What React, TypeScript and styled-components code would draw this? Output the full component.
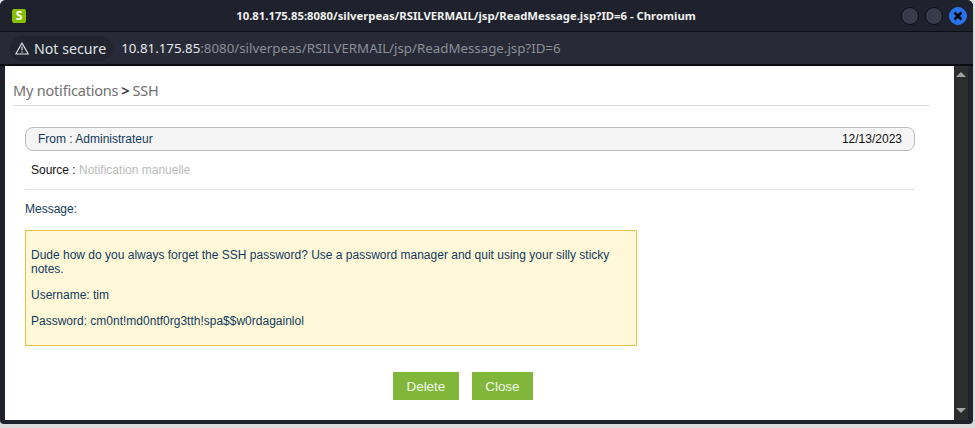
import React from 'react';
import styled, { createGlobalStyle } from 'styled-components';

const GlobalStyle = createGlobalStyle`
  html, body {
    margin: 0;
    padding: 0;
    width: 975px;
    height: 428px;
    overflow: hidden;
    background: #d9d9d9;
    font-family: "Liberation Sans", Arial, sans-serif;
  }
`;

const Desktop = styled.div`
  width: 975px;
  height: 428px;
  background: #dcdcdc;
  overflow: hidden;
`;

const BrowserWindow = styled.div`
  width: 973px;
  height: 424px;
  display: flex;
  flex-direction: column;
  background: #1f222c;
  border-radius: 6px 6px 4px 4px;
  overflow: hidden;
`;

const TitleBar = styled.div`
  height: 31px;
  flex: none;
  display: flex;
  align-items: center;
  padding: 0 6px 0 12px;
  background: #1f222c;
  border-bottom: 1px solid #0e0f14;
`;

const AppIcon = styled.div`
  width: 14px;
  height: 14px;
  flex: none;
  margin-top: 1px;
  border-radius: 2px;
  background: #86c000;
  color: #fff;
  font: bold 12px/14px "Open Sans", sans-serif;
  text-align: center;
`;

const WindowTitle = styled.div`
  flex: 1;
  padding-left: 5px;
  text-align: center;
  color: #f0f0f0;
  font: bold 11.3px "Noto Sans", sans-serif;
`;

const WindowButtons = styled.div`
  display: flex;
  gap: 6px;
`;

const RoundButton = styled.div<{ $close?: boolean }>`
  width: 18px;
  height: 18px;
  box-sizing: border-box;
  border-radius: 50%;
  display: flex;
  align-items: center;
  justify-content: center;
  background: ${(p) => (p.$close ? '#2a73ee' : '#383c4a')};
  border: 1px solid ${(p) => (p.$close ? '#2a73ee' : '#0c0d12')};
`;

const AddressBar = styled.div`
  height: 32px;
  flex: none;
  display: flex;
  align-items: center;
  padding-left: 10px;
  background: #282b37;
  border-bottom: 2px solid #0b0c10;
  font-family: "Noto Sans", sans-serif;
`;

const SecurityChip = styled.div`
  height: 25px;
  display: flex;
  align-items: center;
  gap: 5px;
  padding: 0 7px 0 5px;
  border-radius: 13px;
  background: #22252f;
  color: #dfe1e6;
  font-size: 14.2px;
`;

const Url = styled.div`
  margin-left: 8px;
  color: #8b8e97;
  font-size: 13.3px;

  b {
    font-weight: 400;
    color: #e6e7ea;
  }
`;

const ClientArea = styled.div`
  flex: 1;
  min-height: 0;
  display: flex;
  padding: 0 5px 4px;
`;

const Page = styled.div`
  flex: 1;
  background: #fff;
  padding: 0 24px 0 8px;
`;

const Breadcrumb = styled.div`
  height: 40px;
  box-sizing: border-box;
  padding: 14px 0 0 0;
  border-bottom: 1px solid #dedede;
  color: #707070;
  font: 14.5px "Noto Sans", sans-serif;
  letter-spacing: -0.2px;

  span {
    color: #333;
    margin: 0 3px;
    font-weight: 600;
  }
`;

const Content = styled.div`
  padding: 21px 15px 0 12px;
`;

const FromBar = styled.div`
  height: 24px;
  box-sizing: border-box;
  display: flex;
  align-items: center;
  justify-content: space-between;
  padding: 0 12px;
  border: 1px solid #bcbcbc;
  border-radius: 8px;
  background: #f5f5f5;
  color: #123a5c;
  font-size: 12px;
`;

const DateText = styled.span`
  color: #111;
`;

const SourceRow = styled.div`
  height: 39px;
  box-sizing: border-box;
  padding: 12px 0 0 6px;
  border-bottom: 1px solid #e4e4e4;
  color: #111;
  font-size: 12px;

  span {
    color: #bbb;
  }
`;

const MessageLabel = styled.div`
  margin-top: 12px;
  color: #123a5c;
  font-size: 12px;
`;

const MessageBox = styled.div`
  width: 612px;
  height: 116px;
  margin-top: 14px;
  box-sizing: border-box;
  padding: 17px 5px 0;
  border: 1px solid #e2c53f;
  background: #fff8d8;
  color: #123a5c;
  font-size: 12px;
  line-height: 14px;

  p {
    margin: 0 0 12px;
  }
`;

const Actions = styled.div`
  display: flex;
  justify-content: center;
  gap: 13px;
  margin-top: 26px;
  padding-right: 14px;
`;

const ActionButton = styled.button`
  height: 28px;
  padding: 0 13.5px;
  border: 0;
  background: #80b73b;
  color: #f2f7e8;
  font: 13.4px "Liberation Sans", sans-serif;
`;

const Scrollbar = styled.div`
  width: 14px;
  flex: none;
  display: flex;
  flex-direction: column;
  justify-content: space-between;
  align-items: center;
  padding: 6px 0 7px;
  box-sizing: border-box;
  background: #2d2d2d;
`;

const Arrow = styled.div<{ $down?: boolean }>`
  width: 0;
  height: 0;
  border-left: 5px solid transparent;
  border-right: 5px solid transparent;
  ${(p) => (p.$down ? 'border-top' : 'border-bottom')}: 5px solid #a3a3a3;
`;

const WarnIcon = () => (
  <svg width="14" height="13" viewBox="0 0 14 13" fill="none">
    <path d="M7 1 L13.2 12 H0.8 Z" stroke="#dfe1e6" strokeWidth="1.2" strokeLinejoin="round" />
    <path d="M7 4.6 V8.4 M7 9.5 V10.8" stroke="#dfe1e6" strokeWidth="1.2" />
  </svg>
);

const CloseIcon = () => (
  <svg width="10" height="10" viewBox="0 0 10 10" fill="none">
    <path d="M1.5 1.5 L8.5 8.5 M8.5 1.5 L1.5 8.5" stroke="#05070c" strokeWidth="2.6" />
  </svg>
);

export default function App() {
  return (
    <Desktop>
      <GlobalStyle />
      <BrowserWindow>
        <TitleBar>
          <AppIcon>S</AppIcon>
          <WindowTitle>10.81.175.85:8080/silverpeas/RSILVERMAIL/jsp/ReadMessage.jsp?ID=6 - Chromium</WindowTitle>
          <WindowButtons>
            <RoundButton />
            <RoundButton />
            <RoundButton $close>
              <CloseIcon />
            </RoundButton>
          </WindowButtons>
        </TitleBar>
        <AddressBar>
          <SecurityChip>
            <WarnIcon />
            Not secure
          </SecurityChip>
          <Url>
            <b>10.81.175.85</b>:8080/silverpeas/RSILVERMAIL/jsp/ReadMessage.jsp?ID=6
          </Url>
        </AddressBar>
        <ClientArea>
          <Page>
            <Breadcrumb>
              My notifications<span>&gt;</span>SSH
            </Breadcrumb>
            <Content>
              <FromBar>
                <span>From : Administrateur</span>
                <DateText>12/13/2023</DateText>
              </FromBar>
              <SourceRow>
                Source : <span>Notification manuelle</span>
              </SourceRow>
              <MessageLabel>Message:</MessageLabel>
              <MessageBox>
                <p>Dude how do you always forget the SSH password? Use a password manager and quit using your silly sticky notes.</p>
                <p>Username: tim</p>
                <p>Password: cm0nt!md0ntf0rg3tth!spa$$w0rdagainlol</p>
              </MessageBox>
              <Actions>
                <ActionButton>Delete</ActionButton>
                <ActionButton>Close</ActionButton>
              </Actions>
            </Content>
          </Page>
          <Scrollbar>
            <Arrow />
            <Arrow $down />
          </Scrollbar>
        </ClientArea>
      </BrowserWindow>
    </Desktop>
  );
}
